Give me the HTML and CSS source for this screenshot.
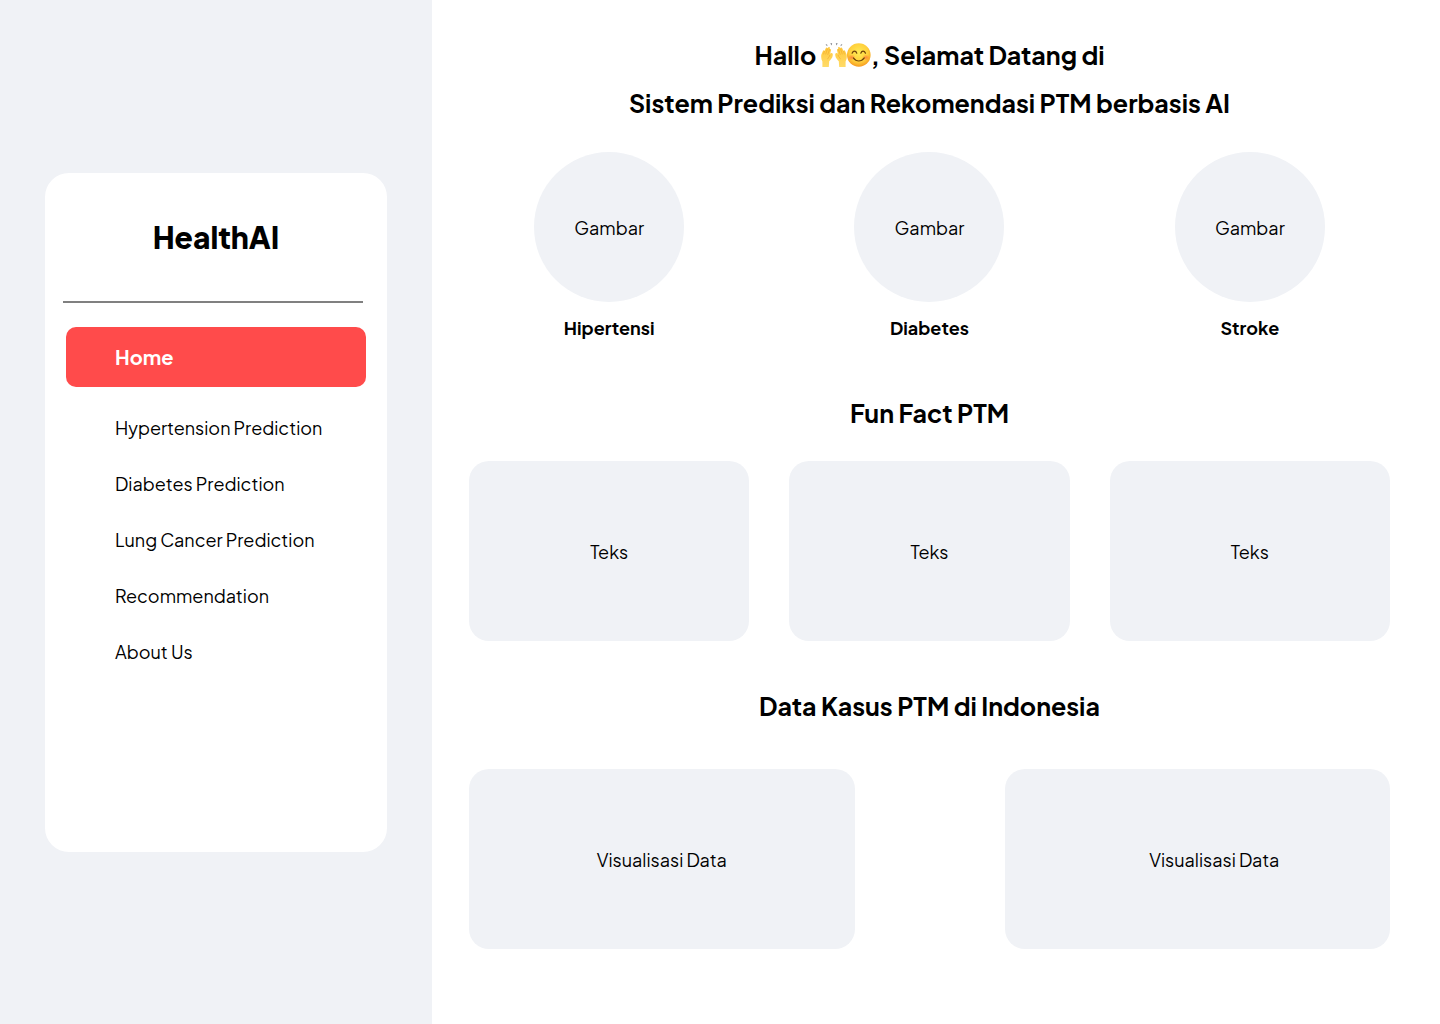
FILE: index.html
```html
<!DOCTYPE html>
<html lang="id">
<head>
<meta charset="utf-8">
<meta name="viewport" content="width=device-width, initial-scale=1">
<title>HealthAI</title>
<link rel="stylesheet" href="styles.css">
</head>
<body>
<div class="layout">
  <aside class="sidebar">
    <div class="menu">
      <p class="brand">HealthAI</p>
      <hr class="divider">
      <nav class="nav">
        <a class="nav-link active" href="#home" aria-current="page">Home</a>
        <a class="nav-link" href="#hypertension">Hypertension Prediction</a>
        <a class="nav-link" href="#diabetes">Diabetes Prediction</a>
        <a class="nav-link" href="#lung-cancer">Lung Cancer Prediction</a>
        <a class="nav-link" href="#recommendation">Recommendation</a>
        <a class="nav-link" href="#about">About Us</a>
      </nav>
    </div>
  </aside>
  <main class="content" id="home">
    <h1 class="heading">Hallo
      <svg class="emoji" viewBox="0 0 50 28" role="img" aria-label="Raised hands and smiling face">
        <defs>
          <linearGradient id="hand" x1="0" y1="0" x2="0" y2="1"><stop offset="0" stop-color="#ffc839"/><stop offset="1" stop-color="#ffdb69"/></linearGradient>
          <radialGradient id="face" cx=".5" cy=".4" r=".6"><stop offset="0" stop-color="#ffeb55"/><stop offset=".65" stop-color="#ffd03c"/><stop offset="1" stop-color="#f79a20"/></radialGradient>
          <radialGradient id="blush"><stop offset="0" stop-color="#ff7138" stop-opacity=".75"/><stop offset="1" stop-color="#ff7138" stop-opacity="0"/></radialGradient>
          <g id="raised">
            <path d="M1.4 26V20.5C.2 18.5-.1 16 .4 13.6L1.9 9.9C2.4 8.8 3.6 9.2 3.4 10.3L4.8 7.2C5.4 6 6.8 6.5 6.4 7.8L7.3 6.6C8 5.5 9.3 6.3 8.8 7.5L8.5 8.5C9.2 7.6 10.3 8.3 9.9 9.4L8.8 14.4C9 13.2 9.3 11.9 10.5 11.9 11.8 12 11.9 13.3 11.7 14.6 11.5 17 9.8 18.5 8.2 20.3L7.8 26Z" fill="url(#hand)"/>
            <path d="M3.4 10.3L2.7 13M6.4 7.8L4.8 13M8.5 8.5L6.8 13.5M8.8 14.4C8.6 16 7 16.3 6.7 17.8" fill="none" stroke="#eda026" stroke-width=".5" stroke-linecap="round"/>
          </g>
        </defs>
        <use href="#raised"/>
        <use href="#raised" transform="matrix(-1 0 0 1 26 0)"/>
        <path d="M4.5 3.8L6 3.3 6.5 5.3ZM9.3 2.2H11.2L10.5 4.5ZM14.8 2.2H16.7L15.5 4.5ZM20 3.3L21.5 3.8 19.5 5.3Z" fill="#7b7e84"/>
        <circle cx="37.8" cy="14" r="11.8" fill="url(#face)"/>
        <ellipse cx="30.6" cy="16.5" rx="4" ry="3" fill="url(#blush)"/>
        <ellipse cx="45" cy="16.5" rx="4" ry="3" fill="url(#blush)"/>
        <path d="M31.1 12.2C32.3 9.4 34.8 9.4 35.8 12.2M39.8 12.2C40.8 9.4 43.3 9.4 44.5 12.2M32.3 16.9C35.3 21 40.3 21 43.3 16.9" fill="none" stroke="#70430b" stroke-width="1.2" stroke-linecap="round"/>
      </svg>, Selamat Datang di<br>Sistem Prediksi dan Rekomendasi PTM berbasis AI</h1>

    <section class="thirds diseases">
      <figure class="disease"><div class="circle">Gambar</div><figcaption>Hipertensi</figcaption></figure>
      <figure class="disease"><div class="circle">Gambar</div><figcaption>Diabetes</figcaption></figure>
      <figure class="disease"><div class="circle">Gambar</div><figcaption>Stroke</figcaption></figure>
    </section>

    <section class="facts">
      <h2 class="heading">Fun Fact PTM</h2>
      <div class="thirds">
        <div class="panel">Teks</div>
        <div class="panel">Teks</div>
        <div class="panel">Teks</div>
      </div>
    </section>

    <section class="cases">
      <h2 class="heading">Data Kasus PTM di Indonesia</h2>
      <div class="halves">
        <div class="panel">Visualisasi Data</div>
        <div class="panel inset">Visualisasi Data</div>
      </div>
    </section>
  </main>
</div>
</body>
</html>
```
FILE: styles.css
```css
* { box-sizing: border-box; }

body {
  margin: 0;
  background: #fff;
  color: #000;
  font: 400 18px/24px "Plus Jakarta Sans", Inter, "Open Sans", sans-serif;
}

.layout {
  display: grid;
  grid-template-columns: 3fr 7fr;
  min-height: 100vh;
}

.sidebar {
  display: flex;
  flex-direction: column;
  justify-content: center;
  padding: 44px 45px;
  background: #f0f2f6;
}

.menu {
  min-height: 679px;
  padding: 44px 21px;
  border-radius: 24px;
  background: #fff;
}

.brand {
  margin: 0 0 44px;
  font-size: 30px;
  line-height: 40px;
  font-weight: 800;
  text-align: center;
}

.divider {
  height: 2px;
  margin: 0 3px 24px -3px;
  border: 0;
  background: #808080;
}

.nav {
  display: flex;
  flex-direction: column;
}

.nav-link {
  padding: 16px 0 16px 49px;
  color: inherit;
  text-decoration: none;
}

.nav-link.active {
  margin-bottom: 13px;
  padding-block: 18px;
  border-radius: 10px;
  background: #ff4b4b;
  color: #fff;
  font-size: 20px;
  font-weight: 700;
}

.content {
  padding: 31px 50px 75px 37px;
}

.heading {
  margin: 0;
  font-size: 25px;
  line-height: 48px;
  font-weight: 700;
  text-align: center;
}

.emoji {
  width: 50px;
  height: 28px;
  vertical-align: -4px;
}

.thirds {
  display: grid;
  grid-template-columns: repeat(3, 1fr);
  gap: 40px;
}

.halves {
  display: grid;
  grid-template-columns: repeat(2, 1fr);
  gap: 150px;
}

.diseases { margin-top: 25px; }

.disease {
  display: flex;
  flex-direction: column;
  align-items: center;
  gap: 14px;
  margin: 0;
  font-weight: 700;
}

.circle {
  display: grid;
  place-items: center;
  width: 150px;
  height: 150px;
  padding-top: 2px;
  border-radius: 50%;
  background: #f0f2f6;
  font-weight: 400;
}

.panel {
  display: grid;
  place-items: center;
  min-height: 180px;
  padding-top: 2px;
  border-radius: 20px;
  background: #f0f2f6;
}

.panel.inset { padding-left: 34px; }

.facts { margin-top: 49px; }
.facts .heading { margin-bottom: 24px; }
.cases { margin-top: 41px; }
.cases .heading { margin-bottom: 39px; }
```
